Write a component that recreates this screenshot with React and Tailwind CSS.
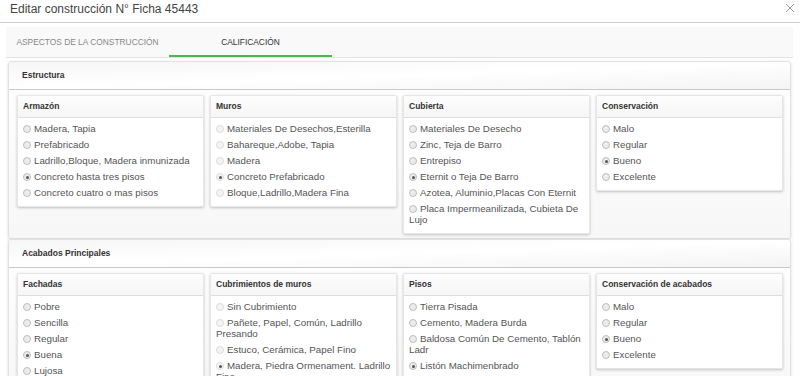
import React from 'react';

const estructura = [
  {
    title: 'Armazón',
    items: ['Madera, Tapia', 'Prefabricado', 'Ladrillo,Bloque, Madera inmunizada', 'Concreto hasta tres pisos', 'Concreto cuatro o mas pisos'],
    checked: 3,
  },
  {
    title: 'Muros',
    items: ['Materiales De Desechos,Esterilla', 'Bahareque,Adobe, Tapia', 'Madera', 'Concreto Prefabricado', 'Bloque,Ladrillo,Madera Fina'],
    checked: 3,
    light: true,
  },
  {
    title: 'Cubierta',
    items: ['Materiales De Desecho', 'Zinc, Teja de Barro', 'Entrepiso', 'Eternit o Teja De Barro', 'Azotea, Aluminio,Placas Con Eternit', 'Placa Impermeanilizada, Cubieta De Lujo'],
    checked: 3,
  },
  {
    title: 'Conservación',
    items: ['Malo', 'Regular', 'Bueno', 'Excelente'],
    checked: 2,
  },
];

const acabados = [
  {
    title: 'Fachadas',
    items: ['Pobre', 'Sencilla', 'Regular', 'Buena', 'Lujosa'],
    checked: 3,
  },
  {
    title: 'Cubrimientos de muros',
    items: ['Sin Cubrimiento', 'Pañete, Papel, Común, Ladrillo Presando', 'Estuco, Cerámica, Papel Fino', 'Madera, Piedra Ormenament. Ladrillo Fino'],
    checked: 3,
    light: true,
  },
  {
    title: 'Pisos',
    items: ['Tierra Pisada', 'Cemento, Madera Burda', 'Baldosa Común De Cemento, Tablón Ladr', 'Listón Machimenbrado', 'Tableta, Caucho, Acrílico, Granito'],
    checked: 3,
  },
  {
    title: 'Conservación de acabados',
    items: ['Malo', 'Regular', 'Bueno', 'Excelente'],
    checked: 2,
  },
];

function Radio({ checked, light }) {
  return (
    <span
      className={`inline-block align-[-1px] w-[8px] h-[8px] rounded-full border mr-[3px] relative ${
        light ? 'border-[#dcdcdc] bg-[#f4f4f4]' : 'border-[#bdbdbd] bg-[#ececec]'
      }`}
    >
      {checked && <span className="absolute left-[1.5px] top-[1.5px] w-[3px] h-[3px] rounded-full bg-[#555]" />}
    </span>
  );
}

function InnerCard({ group }) {
  return (
    <div className="w-[187px] bg-white rounded-[2px] border border-[#e6e6e6] shadow-[0_1px_3px_rgba(0,0,0,0.22)]">
      <div className="h-[22px] border-b border-[#dedede] bg-gradient-to-b from-[#fdfdfd] to-[#f6f6f6] flex items-center pl-[5px] text-[8.5px] font-bold text-[#333]">
        {group.title}
      </div>
      <div className="pt-[5px] pb-[3px] pl-[5px] pr-[2px] text-[9.75px] leading-[11px] text-[#555]">
        {group.items.map((it, i) => (
          <div key={it} className="mb-[5px]">
            <Radio checked={i === group.checked} light={group.light} />
            {it}
          </div>
        ))}
      </div>
    </div>
  );
}

function Section({ title, groups }) {
  return (
    <div className="w-[783px] ml-[8px] rounded-[3px] border border-[#e2e2e2] shadow-[0_1px_3px_rgba(0,0,0,0.15)] bg-gradient-to-b from-white to-[#f7f7f7]">
      <div className="h-[28px] border-b border-[#c9c9c9] bg-gradient-to-br from-[#f6f6f6] via-white to-[#f4f4f4] flex items-center pl-[13px] text-[8.5px] font-bold text-[#333] rounded-t-[3px]">
        {title}
      </div>
      <div className="flex items-start gap-[6px] pl-[8px] pt-[5px] pb-[4px]">
        {groups.map((g) => (
          <InnerCard key={g.title} group={g} />
        ))}
      </div>
    </div>
  );
}

export default function App() {
  return (
    <div className="w-[800px] h-[376px] overflow-hidden bg-white relative font-['Liberation_Sans',Arial,sans-serif]">
      {/* Modal header */}
      <div className="h-[23px] border-b border-[#cfcfcf] pl-[10px] text-[12px] leading-[18px] text-[#444]">
        Editar construcción N° Ficha 45443
      </div>
      <button className="absolute right-[5px] top-[3px] text-[#999]">
        <svg width="10" height="10" viewBox="0 0 10 10">
          <path d="M1 1L9 9M9 1L1 9" stroke="#9a9a9a" strokeWidth="1" />
        </svg>
      </button>

      {/* Tabs */}
      <div className="mt-[4px] ml-[6px] w-[787px] h-[31px] bg-[#f9f9f9] border-b border-[#e4e4e4] flex">
        <div className="w-[163px] flex items-center justify-center text-[8.4px] text-[#888]">
          ASPECTOS DE LA CONSTRUCCIÓN
        </div>
        <div className="w-[163px] relative flex items-center justify-center text-[8.4px] text-[#333]">
          CALIFICACIÓN
          <span className="absolute left-0 right-0 bottom-[0px] h-[2px] bg-[#4cb84c]" />
        </div>
      </div>

      <div className="mt-[3px] flex flex-col">
        <Section title="Estructura" groups={estructura} />
        <Section title="Acabados Principales" groups={acabados} />
      </div>
    </div>
  );
}
